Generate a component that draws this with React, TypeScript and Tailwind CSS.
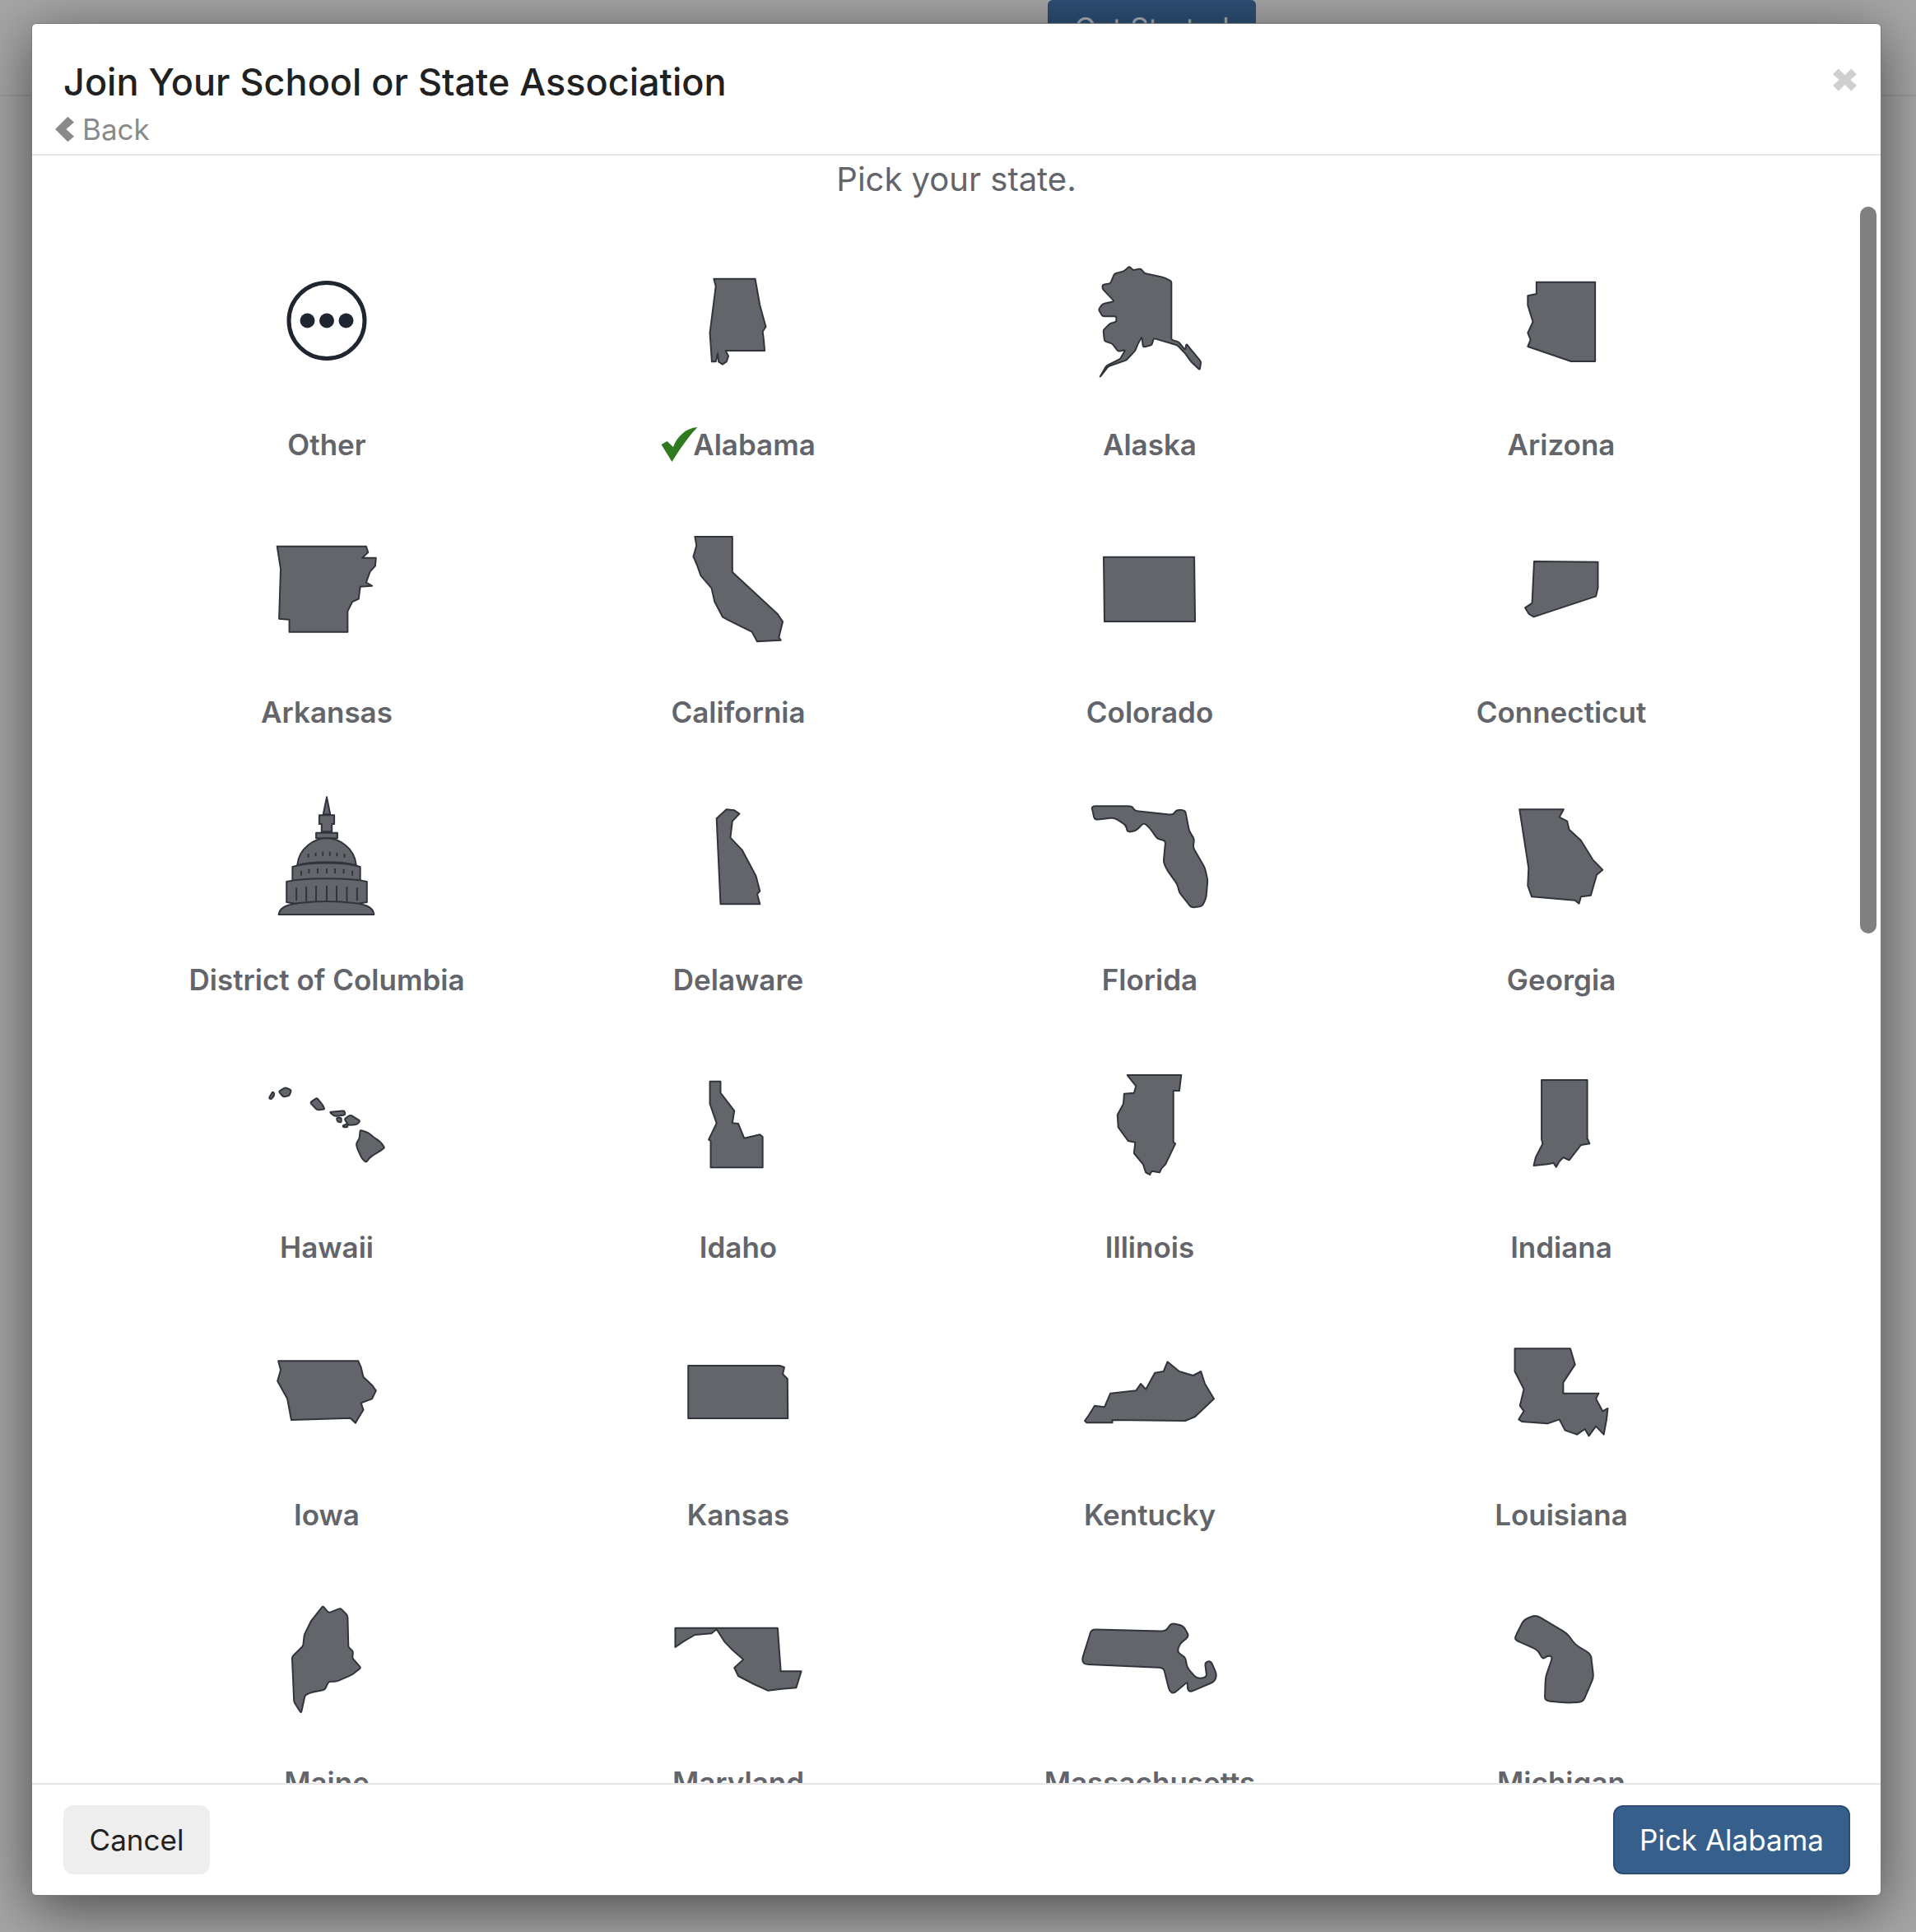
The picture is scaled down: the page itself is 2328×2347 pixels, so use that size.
const C0 = 245;
const C1 = 1290;

type Shape = { name: string; ox: number; oy: number; d: string; extra?: React.ReactNode; soft?: number };

function soften(d: string, r: number) {
  return d
    .split("M")
    .map((part) => part.trim())
    .filter(Boolean)
    .map((part) => {
      const pts = part
        .replace(/Z/g, "")
        .split("L")
        .map((p) => p.trim().split(/\s+/).map(Number));
      const n = pts.length;
      let out = "";
      pts.forEach((p, i) => {
        const a = pts[(i - 1 + n) % n];
        const b = pts[(i + 1) % n];
        const la = Math.hypot(a[0] - p[0], a[1] - p[1]);
        const lb = Math.hypot(b[0] - p[0], b[1] - p[1]);
        const ca = Math.min(r, la / 2) / la;
        const cb = Math.min(r, lb / 2) / lb;
        const s = [p[0] + (a[0] - p[0]) * ca, p[1] + (a[1] - p[1]) * ca];
        const e = [p[0] + (b[0] - p[0]) * cb, p[1] + (b[1] - p[1]) * cb];
        out += `${i === 0 ? "M" : "L"}${s[0]} ${s[1]} Q${p[0]} ${p[1]} ${e[0]} ${e[1]} `;
      });
      return out + "Z";
    })
    .join(" ");
}

const DC = (
  <g>
    <path d="M245 1042 L254 1105 L236 1105 Z" />
    <path d="M226 1108 L264 1108 L264 1140 L258 1140 L258 1168 L232 1168 L232 1140 L226 1140 Z" />
    <path d="M218 1172 L272 1172 L272 1192 L218 1192 Z" />
    <path d="M170 1290 C175 1225 215 1192 245 1192 C275 1192 315 1225 320 1290 C285 1275 205 1275 170 1290 Z" />
    <path d="M158 1296 C200 1278 290 1278 330 1296 L330 1350 C290 1338 200 1338 158 1350 Z" />
    <path d="M143 1350 C190 1335 300 1335 347 1350 L347 1425 C300 1438 190 1438 143 1425 Z" />
    <path d="M123 1470 C126 1442 145 1434 175 1428 C220 1420 270 1420 315 1428 C345 1434 362 1442 365 1470 Z" />
    <path d="M168 1372 V1420 M193 1368 V1422 M218 1365 V1424 M245 1364 V1424 M270 1365 V1424 M296 1368 V1422 M322 1372 V1420" fill="none" />
    <path d="M180 1310 V1328 M200 1304 V1320 M222 1302 V1320 M245 1302 V1320 M266 1302 V1320 M288 1304 V1320 M310 1310 V1328" fill="none" />
    <path d="M198 1248 V1262 M217 1244 V1258 M235 1241 V1256 M253 1241 V1256 M271 1244 V1258 M290 1248 V1262" fill="none" />
  </g>
);

const STATES: Shape[] = [
  { name: "Other", ox: C0, oy: 297, d: "" },
  { name: "Alabama", ox: C1, oy: 297, d: "M1228 143 L1333 143 L1345 240 L1360 318 L1352 335 L1355 370 L1357 405 L1258 405 L1265 425 L1260 445 L1250 455 L1240 445 L1238 415 L1233 445 L1223 445 L1218 340 L1233 170 Z" },
  { name: "Alaska", ox: C0, oy: 267, d: "M193 68 L203 82 L222 76 L232 93 L280 108 L300 122 L300 335 L318 343 L335 372 L338 350 L352 375 L375 415 L372 445 L350 415 L335 385 L315 355 L255 330 L250 355 L228 362 L225 325 L215 350 L208 375 L185 410 L140 432 L118 472 L135 430 L170 405 L183 372 L165 378 L150 350 L130 340 L127 300 L145 275 L160 270 L160 250 L125 250 L115 225 L125 205 L155 195 L125 150 L125 135 L145 130 L155 95 L180 85 Z", soft: 5 },
  { name: "Arizona", ox: C1, oy: 267, d: "M1227 125 L1376 125 L1376 414 L1315 414 L1205 360 L1212 335 L1205 310 L1218 270 L1205 210 L1205 175 L1227 168 Z" },
  { name: "Arkansas", ox: C0, oy: 1272, d: "M119 1118 L345 1118 L350 1140 L335 1160 L370 1160 L368 1190 L355 1210 L345 1250 L360 1262 L330 1265 L326 1310 L310 1320 L298 1355 L298 1430 L150 1430 L150 1385 L124 1382 L128 1200 Z" },
  { name: "California", ox: C1, oy: 1272, d: "M1180 1083 L1275 1083 L1275 1212 L1390 1365 L1403 1393 L1393 1450 L1398 1460 L1338 1465 L1325 1430 L1290 1405 L1262 1385 L1250 1375 L1230 1320 L1222 1270 L1195 1225 L1185 1185 L1176 1155 L1184 1115 Z" },
  { name: "Colorado", ox: C0, oy: 1242, d: "M128 1127 L358 1127 L360 1362 L130 1362 Z" },
  { name: "Connecticut", ox: C1, oy: 1242, d: "M1221 1143 L1383 1145 L1383 1240 L1378 1270 L1220 1345 L1208 1335 L1198 1312 L1216 1295 Z" },
  { name: "District of Columbia", ox: C0, oy: 1257, d: "", extra: DC },
  { name: "Delaware", ox: C1, oy: 1257, d: "M1235 1120 L1260 1087 L1280 1090 L1293 1103 L1275 1130 L1270 1190 L1300 1235 L1335 1330 L1345 1385 L1338 1395 L1345 1432 L1245 1432 Z" },
  { name: "Florida", ox: C0, oy: 297, d: "M97 115 L200 115 L207 132 L305 147 L312 128 L335 130 L345 205 L358 235 L355 265 L385 340 L392 385 L388 450 L378 480 L350 485 L340 465 L320 430 L315 400 L290 350 L280 320 L285 240 L265 235 L245 195 L230 175 L210 205 L188 210 L185 185 L155 157 L105 165 Z", soft: 10 },
  { name: "Georgia", ox: C1, oy: 297, d: "M1184 127 L1296 127 L1285 155 L1305 170 L1310 200 L1340 240 L1370 310 L1395 347 L1380 365 L1365 440 L1340 445 L1335 470 L1325 458 L1215 445 L1205 405 L1207 340 Z" },
  { name: "Hawaii", ox: C0, oy: 1272, d: "M98 1180 L108 1155 L113 1165 L105 1183 Z M123 1155 L140 1140 L155 1150 L150 1170 L135 1175 Z M203 1195 L220 1178 L235 1205 L240 1220 L220 1222 Z M252 1230 L290 1225 L292 1240 L265 1245 Z M270 1250 L282 1250 L282 1268 L272 1265 Z M290 1255 L305 1240 L330 1262 L322 1275 L300 1278 Z M285 1280 L298 1272 L298 1285 L288 1285 Z M330 1295 L350 1305 L368 1325 L378 1335 L385 1345 L392 1360 L380 1372 L365 1385 L355 1395 L345 1413 L335 1400 L328 1380 L322 1360 L320 1345 L328 1325 Z", soft: 5 },
  { name: "Idaho", ox: C1, oy: 1272, d: "M1218 1118 L1245 1118 L1245 1160 L1280 1225 L1275 1270 L1290 1272 L1305 1325 L1345 1312 L1352 1320 L1352 1432 L1220 1432 L1220 1335 L1215 1330 L1235 1270 L1218 1200 Z" },
  { name: "Illinois", ox: C0, oy: 1272, d: "M188 1095 L325 1095 L320 1152 L305 1152 L305 1340 L310 1345 L290 1405 L285 1420 L275 1435 L270 1450 L250 1445 L245 1458 L235 1450 L228 1420 L205 1380 L208 1340 L190 1335 L165 1285 L163 1240 L178 1200 L180 1163 L205 1160 L210 1135 Z" },
  { name: "Indiana", ox: C1, oy: 1272, d: "M1240 1113 L1356 1113 L1356 1325 L1362 1345 L1340 1350 L1310 1405 L1295 1395 L1285 1410 L1277 1430 L1270 1415 L1255 1420 L1220 1425 L1225 1395 L1243 1345 L1240 1330 Z" },
  { name: "Iowa", ox: C0, oy: 267, d: "M122 157 L325 157 L332 180 L338 215 L360 245 L370 265 L360 295 L332 310 L338 335 L325 365 L318 383 L305 365 L155 372 L145 295 L120 230 L128 190 Z" },
  { name: "Kansas", ox: C1, oy: 267, d: "M1163 174 L1395 174 L1407 180 L1403 205 L1415 222 L1416 366 L1163 366 Z" },
  { name: "Kentucky", ox: C0, oy: 267, d: "M80 375 L90 355 L105 320 L130 325 L145 275 L210 265 L222 240 L235 260 L258 200 L280 195 L290 160 L320 195 L355 210 L375 195 L385 240 L408 295 L360 360 L335 375 L150 372 L150 382 L85 382 Z" },
  { name: "Louisiana", ox: C1, oy: 267, d: "M1172 112 L1313 112 L1325 170 L1295 235 L1295 275 L1385 275 L1378 295 L1395 340 L1408 330 L1405 370 L1398 425 L1378 395 L1360 430 L1350 405 L1330 425 L1300 410 L1285 370 L1255 385 L1190 378 L1182 370 L1195 340 L1185 320 L1195 260 L1172 195 Z" },
  { name: "Maine", ox: C0, oy: 1242, d: "M235 1050 L250 1075 L280 1058 L298 1085 L300 1200 L312 1215 L310 1240 L332 1275 L310 1300 L270 1325 L250 1325 L240 1355 L205 1365 L190 1375 L180 1440 L162 1400 L157 1235 L185 1195 L188 1155 L205 1105 Z", soft: 6 },
  { name: "Maryland", ox: C1, oy: 1242, d: "M1130 1130 L1390 1130 L1398 1288 L1450 1288 L1437 1348 L1400 1352 L1365 1358 L1330 1335 L1290 1305 L1280 1275 L1303 1245 L1275 1210 L1255 1180 L1235 1135 L1222 1150 L1180 1155 L1150 1180 L1130 1200 Z" },
  { name: "Massachusetts", ox: C0, oy: 1242, d: "M97 1135 L285 1142 L300 1112 L330 1122 L345 1160 L320 1190 L315 1220 L335 1235 L340 1275 L365 1315 L390 1310 L385 1255 L400 1250 L415 1300 L410 1325 L345 1365 L340 1345 L342 1325 L305 1370 L295 1360 L280 1275 L78 1262 L73 1245 Z", soft: 12 },
  { name: "Michigan", ox: C1, oy: 1242, d: "M1225 1082 L1305 1150 L1325 1190 L1365 1225 L1372 1310 L1345 1400 L1305 1403 L1248 1395 L1250 1310 L1268 1235 L1255 1230 L1243 1245 L1230 1210 L1175 1175 L1172 1165 L1195 1100 Z", soft: 14 },
];

function StateIcon({ s }: { s: Shape }) {
  return (
    <svg viewBox="-90 -75 180 150" className="w-[180px] h-[150px]">
      {s.name === "Other" ? (
        <g>
          <circle cx="0" cy="-0.5" r="46" fill="none" stroke="#1f2630" strokeWidth="5" />
          <circle cx="-23.5" cy="-0.5" r="9" fill="#1f2630" />
          <circle cx="0" cy="-0.5" r="9" fill="#1f2630" />
          <circle cx="23.5" cy="-0.5" r="9" fill="#1f2630" />
        </g>
      ) : (
        <g
          transform={`scale(0.4785 0.3333) translate(${-s.ox} ${-s.oy})`}
          fill="#63656a"
          stroke="#30353c"
          strokeWidth="2"
          strokeLinejoin="round"
          className="[&_path]:[vector-effect:non-scaling-stroke]"
        >
          {s.extra ?? <path d={s.soft ? soften(s.d, s.soft) : s.d} />}
        </g>
      )}
    </svg>
  );
}

function Check() {
  return (
    <svg viewBox="0 0 44 42" className="w-[45px] h-[42px] mr-[-6px] shrink-0">
      <path d="M0 21 L7 17 L14.5 24 C19 12 29 1 44 0 C35 9 24 24 13 42 Z" fill="#2f7a1f" />
    </svg>
  );
}

export default function App() {
  return (
    <div className="relative w-[2328px] h-[2347px] overflow-hidden bg-[#a6a6a6] [font-family:Inter,sans-serif]">
      <div className="h-[117px] border-b-2 border-[#9a9a9a] flex justify-start pl-[1273px]">
        <div className="w-[253px] h-[40px] bg-[#2d4f75] rounded-t-[6px] flex justify-center items-start text-[#a8b0b8] text-[35px] leading-[44px] pt-[12px]">Get Started</div>
      </div>

      <div className="absolute left-[38px] top-[28px] w-[2248px] h-[2275px] bg-white border border-[#7a7a7a] rounded-[6px] shadow-[0_15px_70px_rgba(0,0,0,0.55)] flex flex-col overflow-hidden">
        <header className="relative h-[160px] shrink-0 border-b-[2px] border-[#e5e5e5]">
          <h1 className="absolute left-[38px] top-[41px] text-[45px] leading-[60px] font-medium text-[#212121] whitespace-nowrap">Join Your School or State Association</h1>
          <div className="absolute left-[28px] top-[105px] flex items-center gap-[10px] text-[#8a8a8a] text-[35px] leading-[46px]">
            <svg viewBox="0 0 24 32" className="w-[23px] h-[32px]"><path d="M16 0 L24 7 L14 16 L24 25 L16 32 L0 16 Z" fill="#8a8a8a" /></svg>
            <span>Back</span>
          </div>
          <svg viewBox="0 0 30 28" className="absolute right-[29px] top-[54px] w-[29px] h-[28px]">
            <path d="M7 0 L15 8 L23 0 L30 7 L22 14 L30 21 L23 28 L15 20 L7 28 L0 21 L8 14 L0 7 Z" fill="#cfcfcf" />
          </svg>
        </header>

        <main className="relative flex-1 min-h-0 overflow-hidden">
          <p className="text-center text-[40px] leading-[50px] text-[#63656a] mt-[4px]">Pick your state.</p>
          <div className="grid grid-cols-4 w-[2000px] ml-[108px] mt-[72px]">
            {STATES.map((s) => (
              <div key={s.name} className="h-[325px] flex flex-col items-center">
                <div className="h-[150px] flex items-center justify-center">
                  <StateIcon s={s} />
                </div>
                <div className="mt-[50px] h-[50px] flex items-center justify-center text-[35px] font-semibold text-[#63656a] whitespace-nowrap">
                  {s.name === "Alabama" && <Check />}
                  <span>{s.name}</span>
                </div>
              </div>
            ))}
          </div>
          <div className="absolute left-[2221px] top-[62px] w-[20px] h-[883px] rounded-full bg-[#808080]" />
        </main>

        <footer className="h-[136px] shrink-0 border-t-[2px] border-[#e5e5e5] flex items-center justify-between pl-[38px] pr-[37px]">
          <button className="w-[178px] h-[84px] rounded-[12px] bg-[#eeeeee] text-[#212121] text-[35px]">Cancel</button>
          <button className="w-[288px] h-[84px] rounded-[12px] bg-[#375f8c] border-2 border-[#2c4c73] text-white text-[35px]">Pick Alabama</button>
        </footer>
      </div>
    </div>
  );
}
